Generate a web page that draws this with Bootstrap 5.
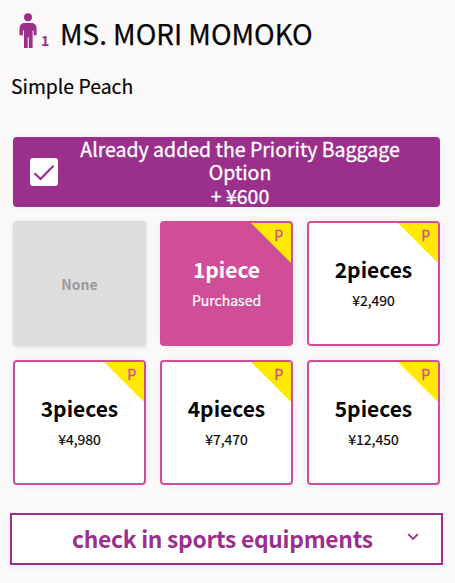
<!DOCTYPE html>
<html lang="en">
<head>
<meta charset="utf-8">
<meta name="viewport" content="width=device-width, initial-scale=1">
<title>Baggage options</title>
<link href="https://cdn.jsdelivr.net/npm/bootstrap@5.3.0/dist/css/bootstrap.min.css" rel="stylesheet">
<style>
:root{--plum:#9a2f8c;--rose:#d04e98;--sun:#ffe900}
body{background:#fcf9fb;color:#050505;font-family:"Noto Sans CJK JP",sans-serif;height:583px;overflow:hidden}
.passenger{padding:12px 0 0 19px;height:70px}
.person{margin-top:1px}
.pax-no{color:var(--plum);font-size:14px;font-weight:700;line-height:20px;margin:18px 0 0 3px;width:11px}
.pax-name{font-size:27.8px;line-height:40px;font-weight:400;margin:1px 0 0 8px;-webkit-text-stroke:.25px}
.fare{font-size:19.4px;line-height:30px;padding:1px 0 0 11px;height:67px;-webkit-text-stroke:.2px}
.options{padding:0 15px 0 13px}
.priority{background:var(--plum);height:70px;border-radius:4px;box-shadow:0 0 8px rgba(0,0,0,.06)}
.tick{width:28px;height:28px;border-radius:3px;margin-left:17px}
.priority-text{font-size:19.5px;line-height:23.5px;font-weight:400;width:344px;margin-left:10px;-webkit-text-stroke:.3px}
.pieces{display:grid;grid-template-columns:repeat(3,133px);gap:14px;margin-top:14px}
.piece{height:125px;padding:35px 0 0;border:2px solid var(--rose);border-radius:4px;background:#fff;color:#050505;box-shadow:0 0 8px rgba(0,0,0,.06);overflow:hidden}
.piece.bought{background:var(--rose);color:#fff}
.piece.bought .sub{font-size:14px}
.piece.none{background:#ddd;border-color:#ddd;color:#999;padding:2px 0 0;font-size:14px;font-weight:700;box-shadow:0 1px 4px rgba(0,0,0,.12)}
.count{font-size:21px;line-height:22px;font-weight:700}
.sub{font-size:14px;line-height:20px;margin-top:10px;-webkit-text-stroke:.2px}
.corner{width:40px;height:40px;background:var(--sun);clip-path:polygon(0 0,100% 0,100% 100%);color:var(--rose);font-size:14px;line-height:25px;text-align:right;padding-right:8px;-webkit-text-stroke:.3px}
.sports{margin:28px 12px 0 10px;width:433px;height:52px;border:2px solid var(--plum);background:#fff;color:var(--plum);box-shadow:0 2px 6px rgba(0,0,0,.07);padding:0 22px 0 60px}
.sports-text{font-size:22.8px;letter-spacing:-.28px;line-height:48px;font-weight:700}
.sports svg{margin-bottom:4px}
</style>
</head>
<body>
<header class="passenger d-flex align-items-start">
  <svg class="person flex-shrink-0" width="19" height="36" viewBox="0 0 19 36" fill="#9a2f8c" aria-hidden="true"><circle cx="9" cy="4.3" r="4"/><path d="M5.2 10H12.6C15.8 10 17.6 12.4 17.6 16V22.3H14.6V17.5H13.6V35H9.8V24.5H8.7V35H5V17.5H3.9V22.3H.5V16C.5 12.4 2.4 10 5.2 10Z"/></svg>
  <span class="pax-no">1</span>
  <h1 class="pax-name text-nowrap">MS. MORI MOMOKO</h1>
</header>
<p class="fare mb-0">Simple Peach</p>
<main class="options">
  <div class="priority d-flex align-items-center text-white text-center">
    <span class="tick bg-white flex-shrink-0 d-flex"><svg width="28" height="28" viewBox="0 0 28 28" fill="none" stroke="#9a2f8c" stroke-width="2.2" aria-hidden="true"><path d="M4.5 15.2L10.6 21L23.5 7.7"/></svg></span>
    <div class="priority-text">Already added the Priority Baggage<br>Option<br>+ ¥600</div>
  </div>
  <div class="pieces text-center">
    <div class="piece none d-flex align-items-center justify-content-center">None</div>
    <div class="piece bought position-relative"><span class="corner position-absolute top-0 end-0">P</span><div class="count">1piece</div><div class="sub">Purchased</div></div>
    <div class="piece position-relative"><span class="corner position-absolute top-0 end-0">P</span><div class="count">2pieces</div><div class="sub">¥2,490</div></div>
    <div class="piece position-relative"><span class="corner position-absolute top-0 end-0">P</span><div class="count">3pieces</div><div class="sub">¥4,980</div></div>
    <div class="piece position-relative"><span class="corner position-absolute top-0 end-0">P</span><div class="count">4pieces</div><div class="sub">¥7,470</div></div>
    <div class="piece position-relative"><span class="corner position-absolute top-0 end-0">P</span><div class="count">5pieces</div><div class="sub">¥12,450</div></div>
  </div>
</main>
<button type="button" class="sports d-flex align-items-center justify-content-between">
  <span class="sports-text text-nowrap">check in sports equipments</span>
  <svg width="12" height="8" viewBox="0 0 12 8" fill="none" stroke="#9a2f8c" stroke-width="1.8" aria-hidden="true"><path d="M1.2 1.2L6 6L10.8 1.2"/></svg>
</button>
<script src="https://cdn.jsdelivr.net/npm/bootstrap@5.3.0/dist/js/bootstrap.bundle.min.js"></script>
</body>
</html>
